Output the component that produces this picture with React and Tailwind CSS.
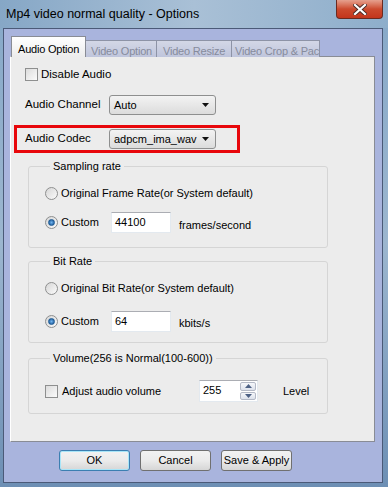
import { useState } from 'react'

// small win7-ish controls
function CheckBox({ checked }) {
  return (
    <span className="w-[13px] h-[13px] border border-[#8e8f8f] bg-linear-to-br from-[#dcdcdc] to-[#fbfbfb] flex items-center justify-center shrink-0">
      {checked && <span className="w-[7px] h-[7px] bg-[#3a6ea5]"></span>}
    </span>
  )
}

function Radio({ checked }) {
  return (
    <span className="w-[13px] h-[13px] rounded-full border border-[#8e8f8f] bg-linear-to-br from-[#d6d6d6] to-[#fbfbfb] flex items-center justify-center shrink-0">
      {checked && (
        <span className="w-[7px] h-[7px] rounded-full bg-radial from-[#6fb4ef] to-[#0e4d8c] border border-[#1d5a94]"></span>
      )}
    </span>
  )
}

function Select({ value }) {
  return (
    <div className="w-[107px] h-[20px] rounded-[3px] border border-[#8e8f8f] bg-linear-to-b from-[#f3f3f3] to-[#dcdcdc] flex items-center justify-between pl-[4px] pr-[5px]">
      <span>{value}</span>
      <svg width="8" height="5" viewBox="0 0 8 5">
        <path d="M0 0 H7 L3.5 4 Z" fill="#111" />
      </svg>
    </div>
  )
}

function TextBox({ value, w = 'w-[60px]' }) {
  return (
    <div className={`${w} h-[21px] bg-white border border-[#e3e9ef] border-t-[#abadb3] pl-[3px] pt-[1px] text-black`}>
      {value}
    </div>
  )
}

function Group({ title, children, className }) {
  return (
    <fieldset className={`ml-[15px] w-[300px] border border-[#d5d5d5] rounded-[3px] pl-[16px] ${className}`}>
      <legend className="ml-[5px] px-[3px] leading-[12px]">{title}</legend>
      {children}
    </fieldset>
  )
}

function Button({ children, focused }) {
  return (
    <button
      className={`w-[71px] h-[21px] rounded-[3px] border bg-linear-to-b from-[#f2f2f2] via-[#ebebeb] to-[#d6d6d6] text-[11px] whitespace-nowrap text-black ${
        focused ? 'border-[#3c7fb1] shadow-[inset_0_0_0_1px_#a8e5f8]' : 'border-[#707070]'
      }`}
    >
      {children}
    </button>
  )
}

export default function App() {
  const [tab] = useState(0)
  const tabs = ['Audio Option', 'Video Option', 'Video Resize', 'Video Crop & Pac']

  return (
    <div className="w-[388px] h-[487px] flex flex-col bg-linear-to-b from-[#86a8c8] via-[#9cb6cf] to-[#6d8fb4] font-['Liberation_Sans',Arial,sans-serif] text-[11px] text-black overflow-hidden">
      {/* title bar */}
      <div className="h-[28px] flex items-start justify-between bg-linear-to-r from-[#86a7c6] via-[#a9c0d6] to-[#8eaecb] shrink-0">
        <span className="self-center pl-[6px] pt-[1px] text-[12.5px] text-black">Mp4 video normal quality - Options</span>
        <div className="mr-[5px] w-[47px] h-[19px] rounded-b-[4px] border border-t-0 border-[#6b2a20] bg-linear-to-b from-[#e5a08e] via-[#cc4a2e] to-[#c3351c] flex items-center justify-center">
          <svg width="14" height="11" viewBox="0 0 14 11">
            <path d="M2 1 L12 10 M12 1 L2 10" stroke="#4a2a26" strokeWidth="4" strokeLinecap="square" />
            <path d="M2 1 L12 10 M12 1 L2 10" stroke="#fff" strokeWidth="2.2" strokeLinecap="square" />
          </svg>
        </div>
      </div>

      {/* client area */}
      <div className="flex-1 pl-[3px] pr-[5px] pb-[4px] flex">
        <div className="flex-1 border border-[#4b5a78] bg-[#a9b4dd] flex flex-col pl-[6px] pt-[7px]">
          {/* tabs */}
          <div className="flex items-end h-[21px] pl-[1px] relative z-10 -mb-[1px]">
            {tabs.map((t, i) =>
              i === tab ? (
                <div
                  key={t}
                  className="h-[21px] w-[75px] border border-b-0 border-[#898c95] bg-linear-to-b from-white to-[#ececec] pl-[6px] pt-[4px] text-[11px] tracking-[-0.2px] whitespace-nowrap"
                >
                  {t}
                </div>
              ) : (
                <div
                  key={t}
                  className={`h-[17px] border border-b-0 border-l-0 border-[#8d93a6] bg-linear-to-b from-[#d3d7e6] to-[#bfc5dc] text-[#868b9c] text-[11px] tracking-[-0.2px] pt-[2px] overflow-hidden whitespace-nowrap ${
                    i === 1 ? 'w-[71px] pl-[5px]' : i === 2 ? 'w-[75px] pl-[6px]' : 'w-[88px] pl-[3px]'
                  }`}
                >
                  {t}
                </div>
              )
            )}
          </div>

          {/* tab page */}
          <div className="w-[365px] h-[386px] border border-[#898c95] border-l-white border-t-[#898c95] bg-[#ececec] flex flex-col pl-[2px]">
            <div className="mt-[11px] ml-[12px] flex items-center gap-[3px] h-[13px]">
              <CheckBox />
              <span className="text-[11.5px]">Disable Audio</span>
            </div>

            <div className="mt-[14px] ml-[12px] flex items-center h-[20px]">
              <span className="w-[84px] text-[11.5px]">Audio Channel</span>
              <Select value="Auto" />
            </div>

            <div className="mt-[10px] ml-[1px] w-[226px] h-[28px] border-[3px] border-[#e8070b] flex items-center pl-[8px]">
              <span className="w-[84px] text-[11.5px]">Audio Codec</span>
              <Select value="adpcm_ima_wav" />
            </div>

            <Group title="Sampling rate" className="mt-[7px] pb-[14px]">
              <div className="mt-[15px] flex items-center gap-[3px] h-[13px]">
                <Radio />
                <span>Original Frame Rate(or System default)</span>
              </div>
              <div className="mt-[12px] flex items-center h-[21px]">
                <Radio checked />
                <span className="ml-[3px] w-[50px]">Custom</span>
                <TextBox value="44100" />
                <span className="ml-[8px] mt-[5px]">frames/second</span>
              </div>
            </Group>

            <Group title="Bit Rate" className="mt-[7px] pb-[10px]">
              <div className="mt-[15px] flex items-center gap-[3px] h-[13px]">
                <Radio />
                <span>Original Bit Rate(or System default)</span>
              </div>
              <div className="mt-[16px] flex items-center h-[21px]">
                <Radio checked />
                <span className="ml-[3px] w-[50px]">Custom</span>
                <TextBox value="64" />
                <span className="ml-[8px] mt-[3px]">kbits/s</span>
              </div>
            </Group>

            <Group title="Volume(256 is Normal(100-600))" className="mt-[9px] pb-[11px]">
              <div className="mt-[16px] flex items-center h-[22px]">
                <CheckBox />
                <span className="ml-[4px] w-[137px]">Adjust audio volume</span>
                <div className="w-[59px] h-[22px] bg-white border border-[#e3e9ef] border-t-[#abadb3] flex">
                  <span className="flex-1 pl-[3px] pt-[1px]">255</span>
                  <div className="w-[16px] flex flex-col gap-[1px] py-[1px] mr-[1px]">
                    <div className="flex-1 border border-[#b4b9c6] rounded-[2px] bg-linear-to-b from-[#f6f7fa] to-[#dde2ec] flex items-center justify-center">
                      <svg width="7" height="4" viewBox="0 0 7 4"><path d="M0 4 H7 L3.5 0 Z" fill="#4d6185" /></svg>
                    </div>
                    <div className="flex-1 border border-[#b4b9c6] rounded-[2px] bg-linear-to-b from-[#f6f7fa] to-[#dde2ec] flex items-center justify-center">
                      <svg width="7" height="4" viewBox="0 0 7 4"><path d="M0 0 H7 L3.5 4 Z" fill="#4d6185" /></svg>
                    </div>
                  </div>
                </div>
                <span className="ml-[25px]">Level</span>
              </div>
            </Group>
          </div>

          {/* buttons */}
          <div className="mt-[8px] ml-[49px] flex gap-[10px]">
            <Button focused>OK</Button>
            <Button>Cancel</Button>
            <Button>Save &amp; Apply</Button>
          </div>
        </div>
      </div>
    </div>
  )
}
